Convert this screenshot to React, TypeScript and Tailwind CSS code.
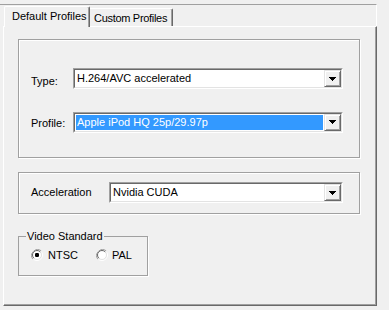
import React from "react";

const font = { fontFamily: '"Liberation Sans", Arial, sans-serif' };

function Arrow() {
  return (
    <div className="w-[17px] h-[17px] shrink-0 bg-[#f0f0f0] border border-t-[#e3e3e3] border-l-[#e3e3e3] border-r-[#696969] border-b-[#696969] shadow-[inset_1px_1px_0_#fff,inset_-1px_-1px_0_#a0a0a0] flex items-center justify-center">
      <svg width="7" height="4" viewBox="0 0 7 4" className="block">
        <path d="M0 0H7V1H6V2H5V3H4V4H3V3H2V2H1V1H0Z" fill="#000" />
      </svg>
    </div>
  );
}

function Combo({ text, selected, className }: { text: string; selected?: boolean; className: string }) {
  return (
    <div className={"h-[21px] border border-t-[#a0a0a0] border-l-[#a0a0a0] border-r-white border-b-white " + className}>
      <div className="h-full border border-t-[#696969] border-l-[#696969] border-r-[#e3e3e3] border-b-[#e3e3e3] bg-white flex">
        <div className="flex-1 p-[1px] flex">
          <div className={"flex-1 flex items-center pl-[1px] leading-none whitespace-nowrap " + (selected ? "bg-[#3399ff] text-white" : "text-black")}>
            {text}
          </div>
        </div>
        <Arrow />
      </div>
    </div>
  );
}

function Radio({ checked }: { checked?: boolean }) {
  return (
    <svg width="12" height="12" viewBox="0 0 12 12" className="block">
      <circle cx="6" cy="6" r="5.5" fill="none" stroke="#ffffff" />
      <path d="M10.2 1.8A6 6 0 0 0 1.8 10.2" stroke="#a0a0a0" fill="none" />
      <circle cx="6" cy="6" r="4.5" fill="#fff" stroke="#e3e3e3" />
      <path d="M9.2 2.8A4.5 4.5 0 0 0 2.8 9.2" stroke="#696969" fill="none" />
      {checked && <rect x="4" y="4" width="4" height="4" rx="1.2" fill="#000" />}
    </svg>
  );
}

export default function App() {
  return (
    <div className="w-[389px] h-[310px] bg-[#f0f0f0] overflow-hidden text-[11px] text-black" style={font}>
      <div className="h-[4px]" />
      <div className="w-[377px] border-t border-[#a0a0a0] border-r border-r-white">
        <div className="flex items-end h-[21px] pl-[4px]">
          <div className="relative z-10 -mb-[1px] h-[21px] w-[86px] bg-[#f0f0f0] border-t border-l border-white border-r border-r-[#696969] shadow-[inset_-1px_0_0_#a0a0a0] rounded-tl-[2px] rounded-tr-[2px] flex items-start pl-[7px] pt-[4px] leading-none whitespace-nowrap">
            Default Profiles
          </div>
          <div className="h-[18px] w-[83px] bg-[#f0f0f0] border-t border-white border-r border-r-[#696969] shadow-[inset_-1px_0_0_#a0a0a0] rounded-tr-[2px] flex items-start pl-[4px] pt-[4px] leading-none whitespace-nowrap tracking-[-0.3px]">
            Custom Profiles
          </div>
        </div>
        <div className="ml-[3px] w-[374px] h-[280px] border border-t-white border-l-white border-r-[#696969] border-b-[#696969] shadow-[inset_-1px_-1px_0_#a0a0a0] pl-[14px] pt-[12px] flex flex-col">
          <div className="w-[342px] h-[119px] border border-[#a0a0a0] shadow-[1px_1px_0_#fff,inset_1px_1px_0_#fff] pl-[12px] pt-[28px] flex flex-col gap-[22px]">
            <div className="flex items-center">
              <div className="w-[42px] pt-[5px]">Type:</div>
              <Combo className="w-[270px]" text="H.264/AVC accelerated" />
            </div>
            <div className="flex items-center">
              <div className="w-[42px] pt-[2px]">Profile:</div>
              <Combo className="w-[270px]" text="Apple iPod HQ 25p/29.97p" selected />
            </div>
          </div>
          <div className="mt-[14px] w-[342px] h-[42px] border border-[#a0a0a0] shadow-[1px_1px_0_#fff,inset_1px_1px_0_#fff] pl-[12px] pt-[9px]">
            <div className="flex items-center">
              <div className="w-[78px]">Acceleration</div>
              <Combo className="w-[234px]" text="Nvidia CUDA" />
            </div>
          </div>
          <fieldset className="mt-[16px] w-[130px] h-[46px] border border-[#a0a0a0] shadow-[1px_1px_0_#fff]">
            <legend className="ml-[7px] px-[1px] leading-[13px]">Video Standard</legend>
            <div className="flex items-center pt-[6px] pl-[12px]">
              <Radio checked />
              <span className="ml-[5px] leading-none">NTSC</span>
              <span className="ml-[18px]"><Radio /></span>
              <span className="ml-[4px] leading-none">PAL</span>
            </div>
          </fieldset>
        </div>
      </div>
    </div>
  );
}
